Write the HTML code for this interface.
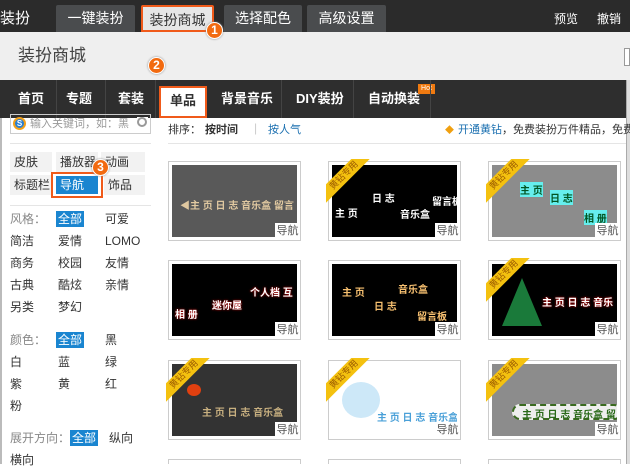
<!DOCTYPE html>
<html><head><meta charset="utf-8"><style>
*{margin:0;padding:0;box-sizing:border-box}
body{width:630px;height:464px;overflow:hidden;background:#fff;font-family:"Liberation Sans","Noto Sans CJK SC",sans-serif;font-size:12px;color:#333;position:relative}
.a{position:absolute;white-space:nowrap}
.top{left:0;top:0;width:630px;height:32px;background:#2b2b2b}
.tab{top:5px;height:27px;background:#4a4c4e;color:#fff;font-size:14px;text-align:center;line-height:26px;border-radius:2px 2px 0 0}
.sub{left:0;top:32px;width:630px;height:48px;background:#efefef}
.nav{left:0;top:80px;width:630px;height:38px;background:#2e2e2e}
.ni{top:80px;height:38px;line-height:38px;color:#fff;font-size:13px;font-weight:bold}
.dv{top:80px;width:1px;height:38px;background:#444}
.circ{width:17px;height:17px;border-radius:50%;background:#f26a10;border:1.5px solid #fff;color:#fff;font-weight:bold;font-size:12px;line-height:14px;text-align:center;box-shadow:0 0 2px #888}
.cat{height:20px;line-height:20px;background:#f2f2f2;padding-left:4px;font-size:12px}
.hl{background:#1a85d0;color:#fff;padding:0 2px}
.card{width:133px;height:80px;border:1px solid #ccc;background:#fff}
.img{position:absolute;left:3px;top:3px;width:125px;height:72px;overflow:hidden}
.lb{position:absolute;right:0;bottom:0;width:25px;height:17px;background:#fff;color:#555;font-size:11px;line-height:17px;text-align:center}
.rb{position:absolute;left:-3px;top:-3px;width:48px;height:48px;overflow:hidden}
.rb div{position:absolute;left:-22px;top:10px;width:80px;height:13px;background:#f4c10f;transform:rotate(-45deg);color:#9a5a00;font-size:9px;line-height:13px;text-align:center}
.t{position:absolute;font-size:10px;font-weight:bold}
</style></head><body>
<div class="a top"></div>
<div class="a" style="left:0;top:7px;color:#fff;font-size:15px">装扮</div>
<div class="a tab" style="left:56px;width:79px">一键装扮</div>
<div class="a tab" style="left:141px;width:73px;background:#e6e6e6;color:#333;border:2px solid #f05a1a">装扮商城</div>
<div class="a tab" style="left:224px;width:78px">选择配色</div>
<div class="a tab" style="left:307px;width:79px">高级设置</div>
<div class="a" style="left:554px;top:10px;color:#fff;font-size:12px">预览</div>
<div class="a" style="left:597px;top:10px;color:#fff;font-size:12px">撤销</div>
<div class="a sub"></div>
<div class="a" style="left:18px;top:41px;font-size:17px;color:#444">装扮商城</div>
<div class="a" style="left:624px;top:48px;width:6px;height:18px;border:1px solid #999;background:#fff"></div>
<div class="a nav"></div>
<div class="a ni" style="left:18px">首页</div>
<div class="a dv" style="left:56px"></div>
<div class="a ni" style="left:66px">专题</div>
<div class="a dv" style="left:105px"></div>
<div class="a ni" style="left:118px">套装</div>
<div class="a dv" style="left:155px"></div>
<div class="a" style="left:159px;top:86px;width:48px;height:32px;background:#fff;border:2px solid #f05a1a;font-weight:bold;font-size:13px;text-align:center;line-height:26px">单品</div>
<div class="a ni" style="left:221px">背景音乐</div>
<div class="a dv" style="left:281px"></div>
<div class="a ni" style="left:296px">DIY装扮</div>
<div class="a dv" style="left:353px"></div>
<div class="a ni" style="left:368px">自动换装</div>
<div class="a" style="left:418px;top:84px;width:17px;height:10px;background:#f07a10;color:#fff;font-size:7px;line-height:10px;text-align:center">Hot</div>
<div class="a dv" style="left:430px"></div>
<div class="a circ" style="left:206px;top:22px">1</div>
<div class="a circ" style="left:148px;top:57px">2</div>
<div class="a" style="left:0;top:118px;width:2px;height:346px;background:#bbb"></div>
<div class="a" style="left:626px;top:80px;width:4px;height:384px;background:#ddd;border-left:1px solid #aaa"></div>
<!-- left -->
<div class="a" style="left:10px;top:114px;width:141px;height:20px;border:1px solid #ccc;color:#999;font-size:11px;line-height:18px;padding-left:19px">输入关键词，如：黑</div>
<div class="a" style="left:13px;top:117px;width:13px;height:13px;border-radius:50%;background:#2a7fd0;border:2px solid #f2a01a;color:#fff;font-size:8px;line-height:9px;text-align:center;font-weight:bold">S</div>
<div class="a" style="left:137px;top:117px;width:11px;height:14px;background:#fff"></div>
<div class="a" style="left:137px;top:117px;width:10px;height:10px;border:2px solid #999;border-radius:50%"></div>
<div class="a" style="left:10px;top:143px;width:141px;height:1px;background:#e5e5e5"></div>
<div class="a cat" style="left:10px;top:152px;width:42px">皮肤</div>
<div class="a cat" style="left:56px;top:152px;width:42px">播放器</div>
<div class="a cat" style="left:101px;top:152px;width:44px">动画</div>
<div class="a cat" style="left:10px;top:175px;width:42px">标题栏</div>
<div class="a" style="left:51px;top:172px;width:52px;height:26px;border:2px solid #f05a1a"></div>
<div class="a" style="left:56px;top:176px;width:42px;height:18px;background:#1a85d0;color:#fff;line-height:18px;padding-left:4px">导航</div>
<div class="a cat" style="left:104px;top:175px;width:41px">饰品</div>
<div class="a circ" style="left:92px;top:159px">3</div>
<div class="a" style="left:10px;top:205px;width:141px;height:1px;background:#e5e5e5"></div>
<div class="a" style="left:10px;top:211px;line-height:16px;color:#888">风格：</div>
<div class="a hl" style="left:56px;top:211px;line-height:16px">全部</div>
<div class="a" style="left:105px;top:211px;line-height:16px">可爱</div>
<div class="a" style="left:10px;top:233px;line-height:16px">简洁</div><div class="a" style="left:58px;top:233px;line-height:16px">爱情</div><div class="a" style="left:105px;top:233px;line-height:16px">LOMO</div>
<div class="a" style="left:10px;top:255px;line-height:16px">商务</div><div class="a" style="left:58px;top:255px;line-height:16px">校园</div><div class="a" style="left:105px;top:255px;line-height:16px">友情</div>
<div class="a" style="left:10px;top:277px;line-height:16px">古典</div><div class="a" style="left:58px;top:277px;line-height:16px">酷炫</div><div class="a" style="left:105px;top:277px;line-height:16px">亲情</div>
<div class="a" style="left:10px;top:299px;line-height:16px">另类</div><div class="a" style="left:58px;top:299px;line-height:16px">梦幻</div>
<div class="a" style="left:10px;top:332px;line-height:16px;color:#888">颜色：</div>
<div class="a hl" style="left:56px;top:332px;line-height:16px">全部</div><div class="a" style="left:105px;top:332px;line-height:16px">黑</div>
<div class="a" style="left:10px;top:354px;line-height:16px">白</div><div class="a" style="left:58px;top:354px;line-height:16px">蓝</div><div class="a" style="left:105px;top:354px;line-height:16px">绿</div>
<div class="a" style="left:10px;top:376px;line-height:16px">紫</div><div class="a" style="left:58px;top:376px;line-height:16px">黄</div><div class="a" style="left:105px;top:376px;line-height:16px">红</div>
<div class="a" style="left:10px;top:398px;line-height:16px">粉</div>
<div class="a" style="left:10px;top:430px;line-height:16px;color:#888">展开方向：</div>
<div class="a hl" style="left:70px;top:430px;line-height:16px">全部</div><div class="a" style="left:109px;top:430px;line-height:16px">纵向</div>
<div class="a" style="left:10px;top:452px;line-height:16px">横向</div>
<!-- sort -->
<div class="a" style="left:168px;top:121px;font-size:11px">排序：</div>
<div class="a" style="left:205px;top:121px;font-size:11px;font-weight:bold">按时间</div>
<div class="a" style="left:254px;top:121px;color:#ccc">|</div>
<div class="a" style="left:268px;top:121px;font-size:11px;color:#1a6fb0">按人气</div>
<div class="a" style="left:445px;top:123px;color:#f0a010;font-size:9px">◆</div>
<div class="a" style="left:458px;top:121px;font-size:11px;color:#1a6fb0">开通黄钻<span style="color:#333">，免费装扮万件精品，免费</span></div>
<div class="a" style="left:168px;top:143px;width:458px;height:1px;background:#e5e5e5"></div>
<!-- cards -->
<div class="a card" style="left:168px;top:161px"><div class="img" style="background:#595959"><div class="t" style="left:8px;top:32px;color:#e0c8a0">◀主 页 日 志 音乐盒 留言</div></div><div class="lb">导航</div></div>
<div class="a card" style="left:328px;top:161px"><div class="img" style="background:#000"><div class="t" style="left:40px;top:25px;color:#fff">日 志</div><div class="t" style="left:3px;top:40px;color:#fff">主 页</div><div class="t" style="left:68px;top:41px;color:#fff">音乐盒</div><div class="t" style="left:100px;top:28px;color:#fff">留言板</div></div><div class="rb"><div>黄钻专用</div></div><div class="lb">导航</div></div>
<div class="a card" style="left:488px;top:161px"><div class="img" style="background:#8c8c8c"><div class="t" style="left:28px;top:17px;color:#052;background:#6ee">主 页</div><div class="t" style="left:58px;top:25px;color:#052;background:#6ee">日 志</div><div class="t" style="left:92px;top:45px;color:#052;background:#6ee">相 册</div></div><div class="rb"><div>黄钻专用</div></div><div class="lb">导航</div></div>
<div class="a card" style="left:168px;top:260px"><div class="img" style="background:#000"><div class="t" style="left:78px;top:20px;color:#fff;text-shadow:0 0 2px #d00">个人档 互</div><div class="t" style="left:40px;top:33px;color:#fff;text-shadow:0 0 2px #d00">迷你屋</div><div class="t" style="left:3px;top:42px;color:#fff;text-shadow:0 0 2px #d00">相 册</div></div><div class="lb">导航</div></div>
<div class="a card" style="left:328px;top:260px"><div class="img" style="background:#000"><div class="t" style="left:10px;top:20px;color:#f7c070">主 页</div><div class="t" style="left:66px;top:17px;color:#f7c070">音乐盒</div><div class="t" style="left:42px;top:34px;color:#f7c070">日 志</div><div class="t" style="left:85px;top:44px;color:#f7c070">留言板</div></div><div class="lb">导航</div></div>
<div class="a card" style="left:488px;top:260px"><div class="img" style="background:#000"><div class="a" style="left:10px;top:14px;width:40px;height:48px;background:#1a7a3a;clip-path:polygon(50% 0,100% 100%,0 100%)"></div><div class="t" style="left:50px;top:30px;color:#fff;text-shadow:0 0 2px #e00">主 页 日 志 音乐</div></div><div class="rb"><div>黄钻专用</div></div><div class="lb">导航</div></div>
<div class="a card" style="left:168px;top:360px"><div class="img" style="background:#333"><div class="a" style="left:15px;top:20px;width:14px;height:12px;background:#e04010;border-radius:50%"></div><div class="t" style="left:30px;top:40px;color:#c8b080">主 页 日 志 音乐盒</div></div><div class="rb"><div>黄钻专用</div></div><div class="lb">导航</div></div>
<div class="a card" style="left:328px;top:360px"><div class="img" style="background:#fff"><div class="a" style="left:10px;top:18px;width:38px;height:36px;border-radius:50%;background:#cde8f8"></div><div class="t" style="left:45px;top:45px;color:#4aa0d8">主 页 日 志 音乐盒</div></div><div class="rb"><div>黄钻专用</div></div><div class="lb">导航</div></div>
<div class="a card" style="left:488px;top:360px"><div class="img" style="background:#8c8c8c"><div class="a" style="left:20px;top:40px;width:110px;height:16px;border-radius:8px;background:#eee;border:2px dashed #3a6a20"></div><div class="t" style="left:30px;top:42px;color:#2a6a1a">主 页 日 志 音乐盒 留</div></div><div class="rb"><div>黄钻专用</div></div><div class="lb">导航</div></div>
<div class="a" style="left:168px;top:459px;width:133px;height:5px;border:1px solid #ccc;border-bottom:0"></div>
<div class="a" style="left:328px;top:459px;width:133px;height:5px;border:1px solid #ccc;border-bottom:0"></div>
<div class="a" style="left:488px;top:459px;width:133px;height:5px;border:1px solid #ccc;border-bottom:0"></div>
</body></html>
